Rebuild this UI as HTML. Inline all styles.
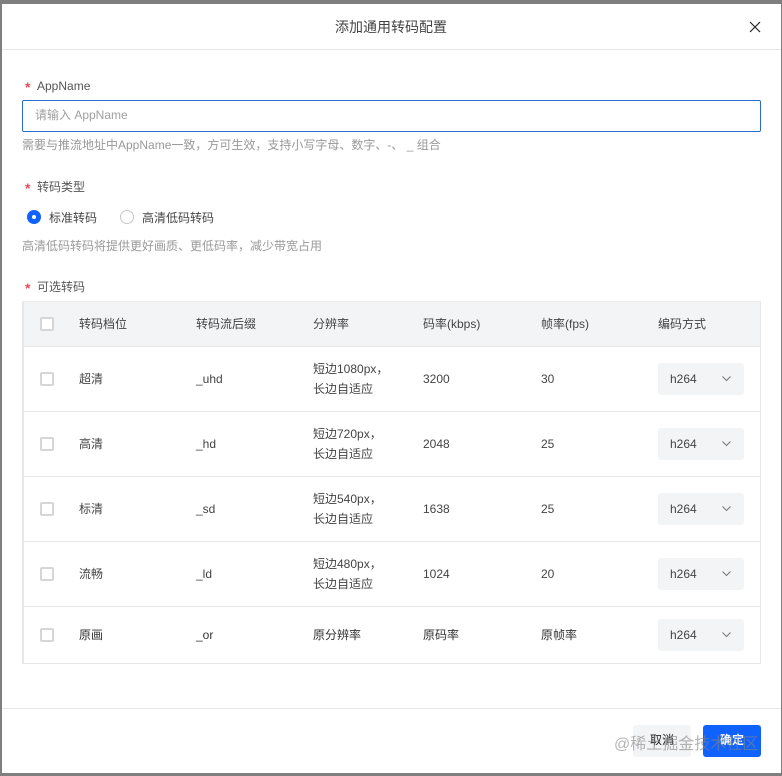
<!DOCTYPE html>
<html lang="zh">
<head>
<meta charset="utf-8">
<title>添加通用转码配置</title>
<style>
html,body{margin:0;padding:0;width:782px;height:776px;overflow:hidden;background:#7f7f7f;}
body{font-family:"Liberation Sans","Noto Sans CJK SC",sans-serif;font-size:12px;color:#333;position:relative;}
.t{position:absolute;white-space:nowrap;line-height:20px;height:20px;}
.b{position:absolute;box-sizing:border-box;}
#m{left:2px;top:4px;width:779px;height:769px;background:#fff;}
.star{color:#e34d59;font-size:14px;font-weight:bold;}
.lab{color:#555;}
.help{color:#999;}
.cb{position:absolute;left:40px;width:14px;height:14px;box-sizing:border-box;border:2px solid #d6d6d6;border-radius:2px;background:#fff;}
.ln{position:absolute;left:22px;width:739px;height:1px;background:#e7e7e7;}
.sel{position:absolute;left:658px;width:86px;height:32px;background:#f3f4f6;border-radius:3px;}
.sel svg{position:absolute;left:64px;top:12px;}
.sel span{position:absolute;left:12px;top:6px;line-height:20px;color:#444;}
.c{color:#444;}
</style>
</head>
<body>
<div class="b" id="m"></div>

<div class="t" style="left:335px;top:17px;font-size:14px;color:#444;">添加通用转码配置</div>
<svg class="b" style="left:749px;top:21px;" width="12" height="12" viewBox="0 0 12 12"><path d="M1 1L11 11M11 1L1 11" stroke="#222" stroke-width="1.2" fill="none"/></svg>
<div class="b" style="left:2px;top:49px;width:779px;height:1px;background:#e7e7e7;"></div>

<div class="t star" style="left:25px;top:77px;">*</div>
<div class="t lab" style="left:37px;top:76px;">AppName</div>
<div class="b" style="left:22px;top:100px;width:739px;height:32px;border:1px solid #2a6bc9;border-radius:2px;"></div>
<div class="t" style="left:35px;top:105px;color:#a0a0a0;">请输入 AppName</div>
<div class="t help" style="left:22px;top:135px;">需要与推流地址中AppName一致，方可生效，支持小写字母、数字、-、 _ 组合</div>

<div class="t star" style="left:25px;top:178px;">*</div>
<div class="t lab" style="left:37px;top:177px;">转码类型</div>
<div class="b" style="left:27px;top:210px;width:14px;height:14px;border-radius:50%;background:#0f62fe;"></div>
<div class="b" style="left:32px;top:215px;width:4px;height:4px;border-radius:50%;background:#fff;"></div>
<div class="t" style="left:49px;top:208px;color:#444;">标准转码</div>
<div class="b" style="left:120px;top:210px;width:14px;height:14px;border-radius:50%;border:1px solid #c8c8c8;background:#fff;"></div>
<div class="t" style="left:142px;top:208px;color:#444;">高清低码转码</div>
<div class="t help" style="left:22px;top:236px;">高清低码转码将提供更好画质、更低码率，减少带宽占用</div>

<div class="t star" style="left:25px;top:278px;">*</div>
<div class="t lab" style="left:37px;top:277px;">可选转码</div>

<!-- table -->
<div class="b" style="left:22px;top:301px;width:739px;height:46px;background:#f3f4f6;border-radius:2px 2px 0 0;"></div>
<div class="b" style="left:22px;top:301px;width:2px;height:363px;background:#e7e7e7;"></div>
<div class="b" style="left:760px;top:301px;width:1px;height:363px;background:#e7e7e7;"></div>
<div class="ln" style="top:301px;background:#ececec;"></div>
<div class="ln" style="top:346px;"></div>
<div class="ln" style="top:411px;"></div>
<div class="ln" style="top:476px;"></div>
<div class="ln" style="top:541px;"></div>
<div class="ln" style="top:606px;"></div>
<div class="ln" style="top:663px;"></div>

<div class="cb" style="top:317px;"></div>
<div class="t c" style="left:79px;top:314px;">转码档位</div>
<div class="t c" style="left:196px;top:314px;">转码流后缀</div>
<div class="t c" style="left:313px;top:314px;">分辨率</div>
<div class="t c" style="left:423px;top:314px;">码率(kbps)</div>
<div class="t c" style="left:541px;top:314px;">帧率(fps)</div>
<div class="t c" style="left:658px;top:314px;">编码方式</div>

<!-- row 1 -->
<div class="cb" style="top:372px;"></div>
<div class="t c" style="left:79px;top:369px;">超清</div>
<div class="t c" style="left:196px;top:369px;">_uhd</div>
<div class="t c" style="left:313px;top:359px;">短边1080px，</div>
<div class="t c" style="left:313px;top:379px;">长边自适应</div>
<div class="t c" style="left:423px;top:369px;">3200</div>
<div class="t c" style="left:541px;top:369px;">30</div>
<div class="sel" style="top:363px;"><span>h264</span><svg width="9" height="7" viewBox="0 0 9 7"><path d="M0.5 1.5L4.5 5.5L8.5 1.5" stroke="#777" stroke-width="1" fill="none"/></svg></div>

<!-- row 2 -->
<div class="cb" style="top:437px;"></div>
<div class="t c" style="left:79px;top:434px;">高清</div>
<div class="t c" style="left:196px;top:434px;">_hd</div>
<div class="t c" style="left:313px;top:424px;">短边720px，</div>
<div class="t c" style="left:313px;top:444px;">长边自适应</div>
<div class="t c" style="left:423px;top:434px;">2048</div>
<div class="t c" style="left:541px;top:434px;">25</div>
<div class="sel" style="top:428px;"><span>h264</span><svg width="9" height="7" viewBox="0 0 9 7"><path d="M0.5 1.5L4.5 5.5L8.5 1.5" stroke="#777" stroke-width="1" fill="none"/></svg></div>

<!-- row 3 -->
<div class="cb" style="top:502px;"></div>
<div class="t c" style="left:79px;top:499px;">标清</div>
<div class="t c" style="left:196px;top:499px;">_sd</div>
<div class="t c" style="left:313px;top:489px;">短边540px，</div>
<div class="t c" style="left:313px;top:509px;">长边自适应</div>
<div class="t c" style="left:423px;top:499px;">1638</div>
<div class="t c" style="left:541px;top:499px;">25</div>
<div class="sel" style="top:493px;"><span>h264</span><svg width="9" height="7" viewBox="0 0 9 7"><path d="M0.5 1.5L4.5 5.5L8.5 1.5" stroke="#777" stroke-width="1" fill="none"/></svg></div>

<!-- row 4 -->
<div class="cb" style="top:567px;"></div>
<div class="t c" style="left:79px;top:564px;">流畅</div>
<div class="t c" style="left:196px;top:564px;">_ld</div>
<div class="t c" style="left:313px;top:554px;">短边480px，</div>
<div class="t c" style="left:313px;top:574px;">长边自适应</div>
<div class="t c" style="left:423px;top:564px;">1024</div>
<div class="t c" style="left:541px;top:564px;">20</div>
<div class="sel" style="top:558px;"><span>h264</span><svg width="9" height="7" viewBox="0 0 9 7"><path d="M0.5 1.5L4.5 5.5L8.5 1.5" stroke="#777" stroke-width="1" fill="none"/></svg></div>

<!-- row 5 -->
<div class="cb" style="top:628px;"></div>
<div class="t c" style="left:79px;top:625px;color:#333;">原画</div>
<div class="t c" style="left:196px;top:625px;color:#333;">_or</div>
<div class="t c" style="left:313px;top:625px;color:#333;">原分辨率</div>
<div class="t c" style="left:423px;top:625px;color:#333;">原码率</div>
<div class="t c" style="left:541px;top:625px;color:#333;">原帧率</div>
<div class="sel" style="top:619px;"><span>h264</span><svg width="9" height="7" viewBox="0 0 9 7"><path d="M0.5 1.5L4.5 5.5L8.5 1.5" stroke="#777" stroke-width="1" fill="none"/></svg></div>

<!-- footer -->
<div class="b" style="left:2px;top:708px;width:779px;height:1px;background:#e7e7e7;"></div>
<div class="b" style="left:633px;top:725px;width:58px;height:32px;background:#f3f4f6;border-radius:3px;"></div>
<div class="t" style="left:650px;top:730px;color:#222;">取消</div>
<div class="b" style="left:703px;top:725px;width:58px;height:32px;background:#0f62fe;border-radius:3px;"></div>
<div class="t" style="left:720px;top:730px;color:#fff;font-weight:bold;">确定</div>
<div class="t" style="left:614px;top:735px;font-size:16px;color:rgba(130,130,130,.6);">@稀土掘金技术社区</div>
</body>
</html>
